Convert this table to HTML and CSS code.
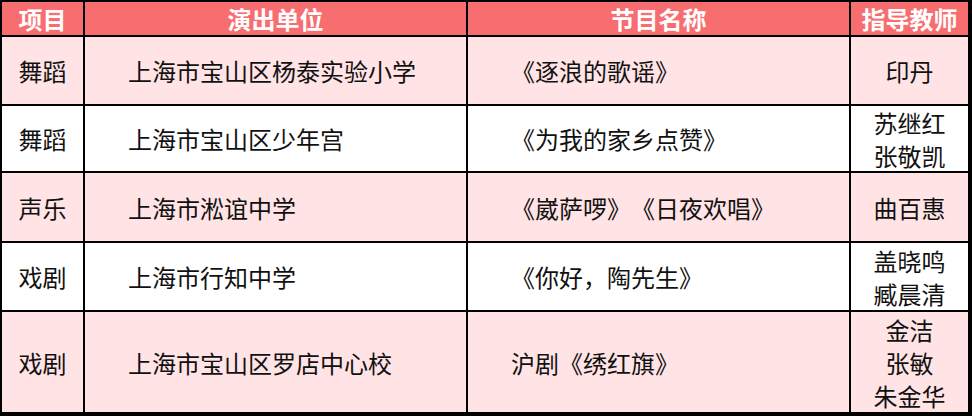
FILE: index.html
```html
<!DOCTYPE html>
<html lang="zh-CN">
<head>
<meta charset="utf-8">
<title>演出节目表</title>
<link rel="stylesheet" href="styles.css">
</head>
<body>
<div class="sheet">
  <div class="cell head">项目</div>
  <div class="cell head">演出单位</div>
  <div class="cell head">节目名称</div>
  <div class="cell head">指导教师</div>

  <div class="cell pink center">舞蹈</div>
  <div class="cell pink left">上海市宝山区杨泰实验小学</div>
  <div class="cell pink left">《逐浪的歌谣》</div>
  <div class="cell pink center">印丹</div>

  <div class="cell center">舞蹈</div>
  <div class="cell left">上海市宝山区少年宫</div>
  <div class="cell left">《为我的家乡点赞》</div>
  <div class="cell center stack"><span>苏继红</span><span>张敬凯</span></div>

  <div class="cell pink center">声乐</div>
  <div class="cell pink left">上海市淞谊中学</div>
  <div class="cell pink left">《崴萨啰》《日夜欢唱》</div>
  <div class="cell pink center">曲百惠</div>

  <div class="cell center">戏剧</div>
  <div class="cell left">上海市行知中学</div>
  <div class="cell left">《你好，陶先生》</div>
  <div class="cell center stack"><span>盖晓鸣</span><span>臧晨清</span></div>

  <div class="cell pink center">戏剧</div>
  <div class="cell pink left">上海市宝山区罗店中心校</div>
  <div class="cell pink left">沪剧《绣红旗》</div>
  <div class="cell pink center stack"><span>金洁</span><span>张敏</span><span>朱金华</span></div>
</div>
</body>
</html>
```

FILE: styles.css
```css
html, body {
  margin: 0;
  padding: 0;
  background: #ffffff;
}

.sheet {
  display: grid;
  grid-template-columns: 81px 381px 381px 117px;
  grid-template-rows: 33px 67px 65px 68px 67px 100px;
  gap: 2px;
  padding: 2px 4px 4px 2px;
  width: 972px;
  height: 416px;
  box-sizing: border-box;
  background: #000000;
  font-family: "Noto Sans CJK SC", "Microsoft YaHei", sans-serif;
  font-size: 24px;
  color: #111111;
  text-spacing-trim: space-all;
  font-feature-settings: "halt" 0, "chws" 0;
}

.cell {
  background: #ffffff;
  display: flex;
  align-items: center;
  line-height: 33px;
  white-space: nowrap;
  overflow: hidden;
}

.pink {
  background: #ffe3e5;
}

.head {
  background: #f76d70;
  color: #ffffff;
  font-weight: 700;
  justify-content: center;
  line-height: 33px;
}

.center {
  justify-content: center;
  text-align: center;
}

.left {
  justify-content: flex-start;
  padding-left: 43px;
}

.stack {
  flex-direction: column;
  justify-content: center;
}
```
